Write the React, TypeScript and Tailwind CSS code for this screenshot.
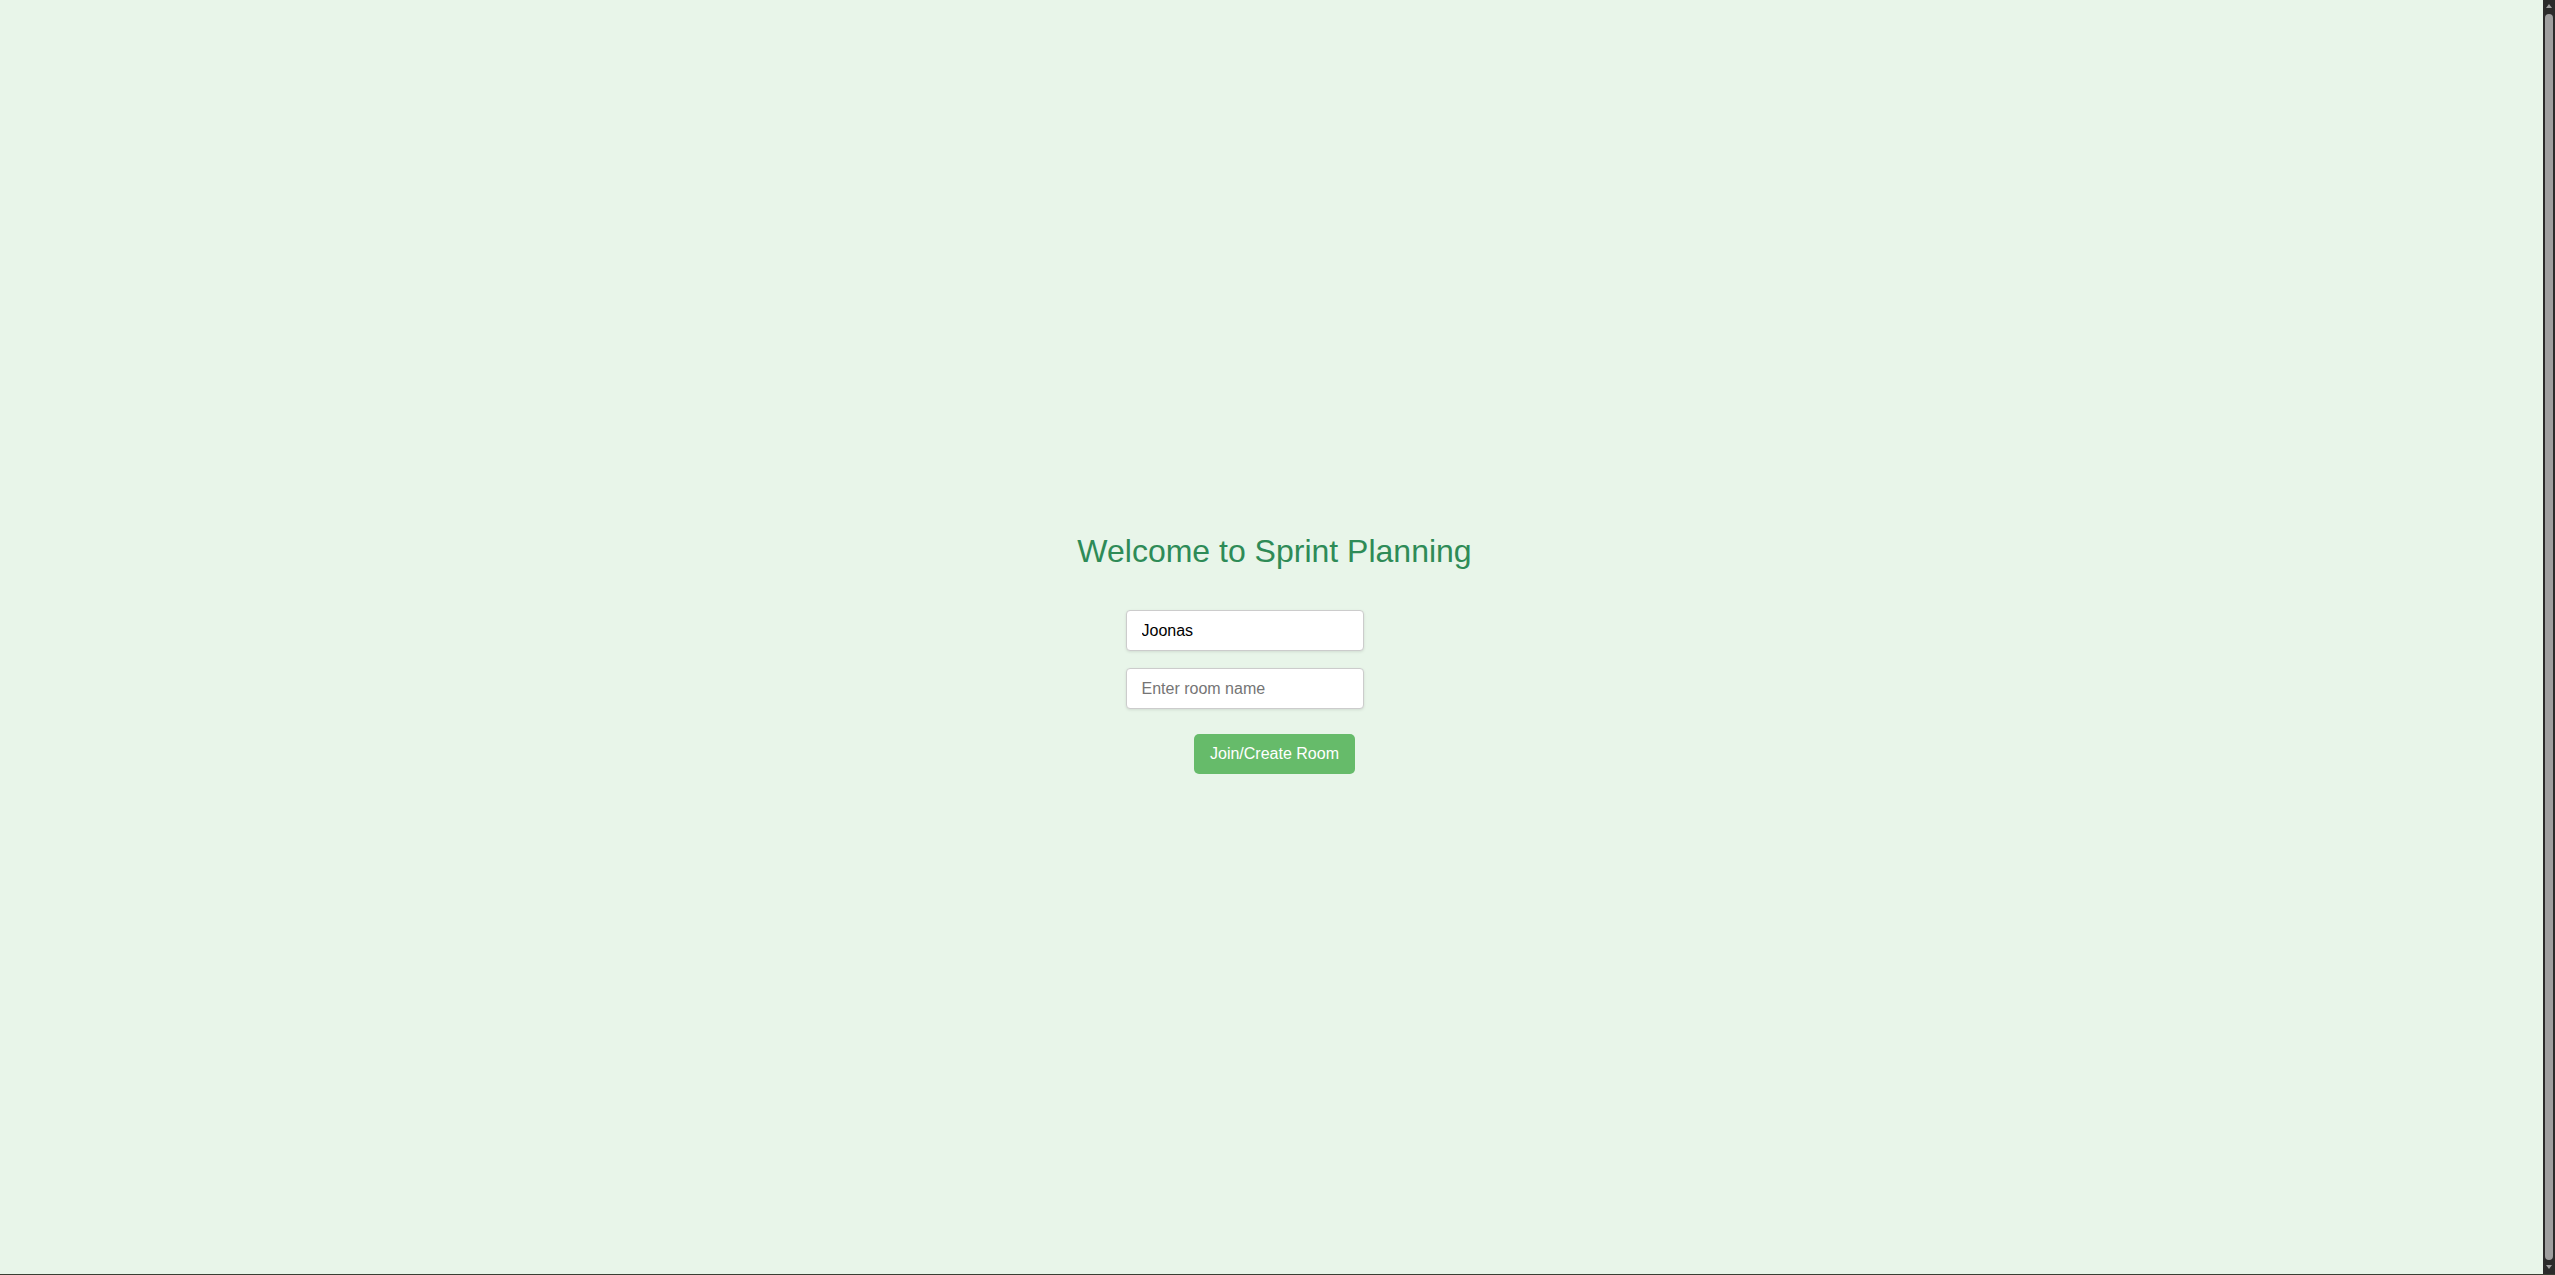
import React from "react";

export default function App() {
  return (
    <div className="flex h-[1275px] w-[2555px] flex-col overflow-hidden" style={{ fontFamily: '"Liberation Sans", Arial, sans-serif' }}>
      <div className="flex h-[1274px] w-full">
        <div className="flex flex-1 flex-col items-center bg-[#e8f5e9] pt-[533px]">
          <div className="ml-[6px] flex flex-col items-center">
            <h1 className="text-[32px] font-normal leading-[normal] text-[#2e8b57]">Welcome to Sprint Planning</h1>
            <div className="mr-[60px] mt-[40px] flex flex-col gap-[17px]">
              <input
                type="text"
                defaultValue="Joonas"
                className="h-[41px] w-[238px] rounded-[4px] border border-[#cccccc] bg-white px-[15px] py-[10px] text-[16px] leading-[normal] text-black shadow-[0_1px_3px_rgba(0,0,0,0.1)] outline-none"
              />
              <input
                type="text"
                placeholder="Enter room name"
                className="h-[41px] w-[238px] rounded-[4px] border border-[#cccccc] bg-white px-[15px] py-[10px] text-[16px] leading-[normal] text-black shadow-[0_1px_3px_rgba(0,0,0,0.1)] outline-none placeholder:text-[#757575]"
              />
            </div>
            <button className="mt-[25px] h-[40px] w-[161px] rounded-[5px] bg-[#66bb6a] text-[16px] leading-[normal] text-white">
              Join/Create Room
            </button>
          </div>
        </div>
        <div className="flex w-[12px] flex-col items-center bg-[#2b2b2b]">
          <svg width="12" height="12" viewBox="0 0 12 12" className="shrink-0">
            <path d="M3 8 L6 4 L9 8 Z" fill="#a0a0a0" />
          </svg>
          <div className="mx-[2px] mt-[2px] w-[8px] flex-1 rounded-[4px] bg-[#9f9f9f]" />
          <svg width="12" height="14" viewBox="0 0 12 14" className="shrink-0">
            <path d="M3 5 L6 9 L9 5 Z" fill="#a0a0a0" />
          </svg>
        </div>
      </div>
      <div className="h-px w-full bg-[#3b3f33]" />
    </div>
  );
}
